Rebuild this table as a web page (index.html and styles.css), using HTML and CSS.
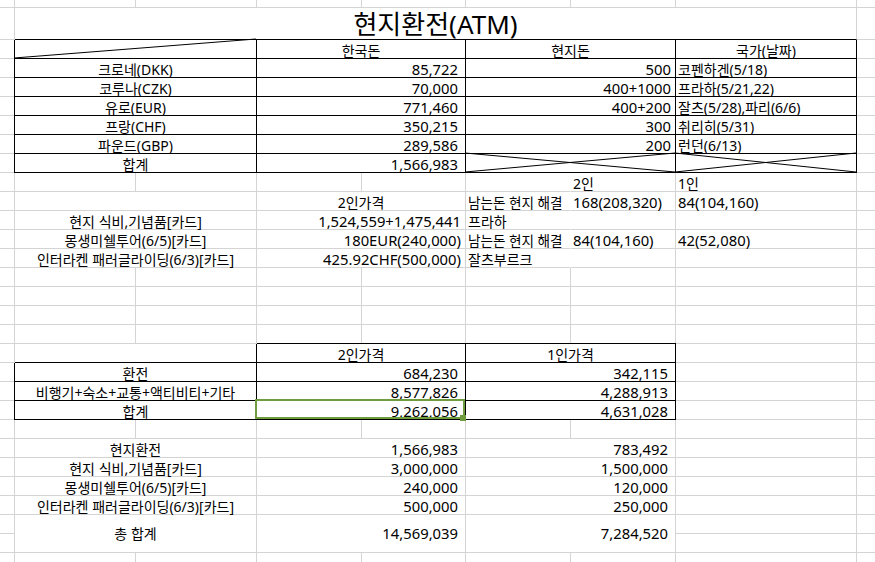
FILE: index.html
```html
<!DOCTYPE html>
<html lang="ko">
<head>
<meta charset="utf-8">
<title>현지환전(ATM)</title>
<link rel="stylesheet" href="styles.css">
</head>
<body>
<div class="sheet">
  <div class="row row-top"></div>
  <div class="row row-title">
    <div class="c cBH title">현지환전(ATM)</div>
  </div>

  <div class="row">
    <div class="c k cBC tl"><svg class="xline" preserveAspectRatio="none"><line x1="0" y1="100%" x2="100%" y2="0"/></svg></div>
    <div class="c k cDE ctr">한국돈</div>
    <div class="c k cFG ctr">현지돈</div>
    <div class="c k cH ctr">국가(날짜)</div>
  </div>
  <div class="row">
    <div class="c k cBC tl ctr">크로네(DKK)</div>
    <div class="c k cDE num">85,722</div>
    <div class="c k cFG rt n">500</div>
    <div class="c k cH lt">코펜하겐(5/18)</div>
  </div>
  <div class="row">
    <div class="c k cBC tl ctr">코루나(CZK)</div>
    <div class="c k cDE num">70,000</div>
    <div class="c k cFG rt n">400+1000</div>
    <div class="c k cH lt">프라하(5/21,22)</div>
  </div>
  <div class="row">
    <div class="c k cBC tl ctr">유로(EUR)</div>
    <div class="c k cDE num">771,460</div>
    <div class="c k cFG rt n">400+200</div>
    <div class="c k cH lt">잘츠(5/28),파리(6/6)</div>
  </div>
  <div class="row">
    <div class="c k cBC tl ctr">프랑(CHF)</div>
    <div class="c k cDE num">350,215</div>
    <div class="c k cFG rt n">300</div>
    <div class="c k cH lt">취리히(5/31)</div>
  </div>
  <div class="row">
    <div class="c k cBC tl ctr">파운드(GBP)</div>
    <div class="c k cDE num">289,586</div>
    <div class="c k cFG rt n">200</div>
    <div class="c k cH lt">런던(6/13)</div>
  </div>
  <div class="row">
    <div class="c k cBC tl ctr">합계</div>
    <div class="c k cDE num">1,566,983</div>
    <div class="c k cFG"><svg class="xline" preserveAspectRatio="none"><line x1="0" y1="0" x2="100%" y2="100%"/><line x1="0" y1="100%" x2="100%" y2="0"/></svg></div>
    <div class="c k cH"><svg class="xline" preserveAspectRatio="none"><line x1="0" y1="0" x2="100%" y2="100%"/><line x1="0" y1="100%" x2="100%" y2="0"/></svg></div>
  </div>

  <div class="row">
    <div class="c cF nr"></div>
    <div class="c cG lt">2인</div>
    <div class="c cH lt">1인</div>
  </div>
  <div class="row">
    <div class="c cBC"></div>
    <div class="c cDE ctr">2인가격</div>
    <div class="c cF nr lt tight">남는돈 현지 해결</div>
    <div class="c cG lt n">168(208,320)</div>
    <div class="c cH lt n">84(104,160)</div>
  </div>
  <div class="row">
    <div class="c cBC ctr">현지 식비,기념품[카드]</div>
    <div class="c cDE rt n">1,524,559+1,475,441</div>
    <div class="c cF nr lt">프라하</div>
  </div>
  <div class="row">
    <div class="c cBC ctr">몽생미쉘투어(6/5)[카드]</div>
    <div class="c cDE rt n">180EUR(240,000)</div>
    <div class="c cF nr lt tight">남는돈 현지 해결</div>
    <div class="c cG lt n">84(104,160)</div>
    <div class="c cH lt n">42(52,080)</div>
  </div>
  <div class="row">
    <div class="c cBC ctr">인터라켄 패러글라이딩(6/3)[카드]</div>
    <div class="c cDE rt n">425.92CHF(500,000)</div>
    <div class="c cF nr lt">잘츠부르크</div>
  </div>
  <div class="row"></div>
  <div class="row"></div>
  <div class="row"></div>
  <div class="row"></div>

  <div class="row">
    <div class="c k cBC"></div>
    <div class="c k cDE ctr tt">2인가격</div>
    <div class="c k cFG ctr tt">1인가격</div>
  </div>
  <div class="row">
    <div class="c k cBC tl ctr">환전</div>
    <div class="c k cDE num">684,230</div>
    <div class="c k cFG num">342,115</div>
  </div>
  <div class="row">
    <div class="c k cBC tl ctr">비행기+숙소+교통+액티비티+기타</div>
    <div class="c k cDE num">8,577,826</div>
    <div class="c k cFG num">4,288,913</div>
  </div>
  <div class="row">
    <div class="c k cBC tl ctr">합계</div>
    <div class="c k cDE num">9,262,056<span class="sel"></span></div>
    <div class="c k cFG num">4,631,028</div>
  </div>
  <div class="row"></div>

  <div class="row">
    <div class="c cBC ctr">현지환전</div>
    <div class="c cDE num">1,566,983</div>
    <div class="c cFG num">783,492</div>
  </div>
  <div class="row">
    <div class="c cBC ctr">현지 식비,기념품[카드]</div>
    <div class="c cDE num">3,000,000</div>
    <div class="c cFG num">1,500,000</div>
  </div>
  <div class="row">
    <div class="c cBC ctr">몽생미쉘투어(6/5)[카드]</div>
    <div class="c cDE num">240,000</div>
    <div class="c cFG num">120,000</div>
  </div>
  <div class="row">
    <div class="c cBC ctr">인터라켄 패러글라이딩(6/3)[카드]</div>
    <div class="c cDE num">500,000</div>
    <div class="c cFG num">250,000</div>
  </div>
  <div class="row row-tall">
    <div class="c cBC ctr mid">총 합계</div>
    <div class="c cDE num mid">14,569,039</div>
    <div class="c cFG num mid">7,284,520</div>
  </div>
</div>
</body>
</html>
```

FILE: styles.css
```css
html, body {
  margin: 0;
  padding: 0;
  background: #fff;
}

.sheet {
  width: 875px;
  height: 562px;
  overflow: hidden;
  font-family: "Noto Sans", "Noto Sans CJK KR", sans-serif;
  font-size: 14px;
  color: #000;
  background-color: #fff;
  background-image:
    linear-gradient(#d4d4d4, #d4d4d4),
    linear-gradient(#d4d4d4, #d4d4d4),
    linear-gradient(#d4d4d4, #d4d4d4),
    linear-gradient(#d4d4d4, #d4d4d4),
    linear-gradient(#d4d4d4, #d4d4d4),
    linear-gradient(#d4d4d4, #d4d4d4),
    linear-gradient(#d4d4d4, #d4d4d4),
    linear-gradient(#d4d4d4, #d4d4d4),
    linear-gradient(#d4d4d4, #d4d4d4),
    linear-gradient(#d4d4d4, #d4d4d4),
    repeating-linear-gradient(to bottom, transparent 0 18px, #d4d4d4 18px 19px);
  background-position:
    14px 0, 135px 0, 256px 0, 361px 0, 465px 0, 570px 0, 675px 0, 856px 0,
    0 7px, 0 39px, 0 40px;
  background-size:
    1px 100%, 1px 100%, 1px 100%, 1px 100%, 1px 100%, 1px 100%, 1px 100%, 1px 100%,
    100% 1px, 100% 1px, 100% 100%;
  background-repeat: no-repeat;
}

.row {
  display: grid;
  grid-template-columns: 15px 121px 121px 105px 104px 105px 105px 181px 18px;
  height: 19px;
}
.row-top { height: 8px; }
.row-title { height: 32px; }
.row-tall { height: 38px; }

.cBH { grid-column: 2 / 9; }
.cBC { grid-column: 2 / 4; }
.cDE { grid-column: 4 / 6; }
.cF  { grid-column: 6; }
.cG  { grid-column: 7; }
.cFG { grid-column: 6 / 8; }
.cH  { grid-column: 8; }

.c {
  position: relative;
  display: flex;
  align-items: flex-end;
  justify-content: flex-start;
  min-width: 0;
  background: #fff;
  border-right: 1px solid #d4d4d4;
  border-bottom: 1px solid #d4d4d4;
  line-height: 15px;
  white-space: nowrap;
}

.k { border-right-color: #000; border-bottom-color: #000; }
.nr { border-right-color: #fff; }
.tl { box-shadow: -1px 0 0 #000; }
.tt { box-shadow: 0 -1px 0 #000; }

.ctr { justify-content: center; }
.lt { justify-content: flex-start; padding-left: 2px; }
.rt { justify-content: flex-end; padding-right: 4px; }
.n { font-size: 14.8px; }
.tight { font-size: 13.6px; }
.num {
  justify-content: flex-end;
  padding-right: 7px;
  font-size: 14.8px;
}
.mid { align-items: center; }

.title {
  justify-content: center;
  font-size: 26px;
  line-height: 30px;
  border-bottom-color: #000;
}

.xline {
  position: absolute;
  top: -1px;
  left: -1px;
  width: calc(100% + 1px);
  height: calc(100% + 1px);
  overflow: visible;
}
.xline line {
  stroke: #000;
  stroke-width: 1;
}

.sel {
  position: absolute;
  top: -2px;
  left: -2px;
  right: 0;
  bottom: 0;
  border: 2px solid #6f9c3c;
}
.sel::after {
  content: "";
  position: absolute;
  width: 6px;
  height: 6px;
  right: -3px;
  bottom: -4px;
  background: #6f9c3c;
}
```
